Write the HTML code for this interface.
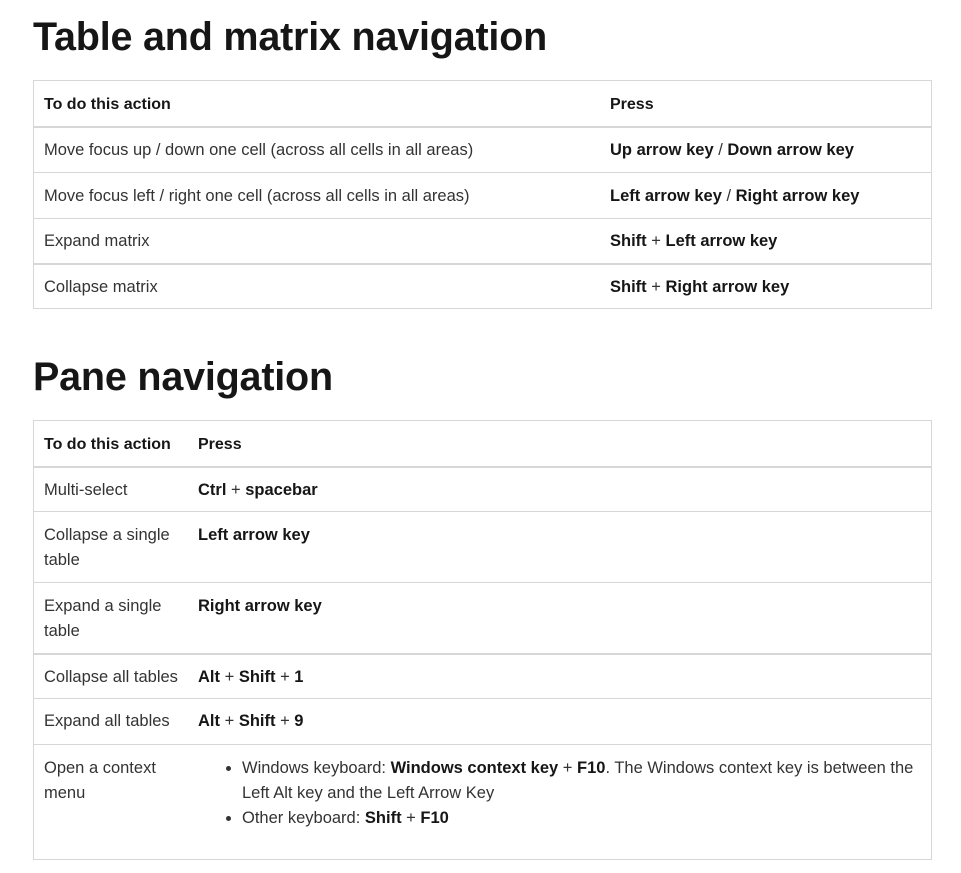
<!DOCTYPE html>
<html><head><style>
body{margin:0;background:#fff;font-family:"Liberation Sans",sans-serif;color:#333;width:961px;height:873px;overflow:hidden;position:relative}
h1{position:absolute;left:33px;margin:0;font-size:39.5px;font-weight:bold;color:#161616;letter-spacing:-0.2px;line-height:1}
table{position:absolute;left:33px;width:899px;border-collapse:collapse;font-size:16.5px;border:1px solid #d7d7d7}
td,th{border-top:1px solid #d7d7d7;padding:0 10px;text-align:left;vertical-align:middle}
td{padding-top:2px}
th{font-weight:bold;color:#161616;padding-top:4px;font-size:16px}
b{color:#161616}
.t2 td{vertical-align:top;line-height:25px}
ul{margin:0;padding-left:44px}
li{line-height:25px}
</style></head><body>
<h1 style="top:18px">Table and matrix navigation</h1>
<table style="top:80px">
<tr style="height:46px;border-bottom:2px solid #d7d7d7"><th style="width:546px">To do this action</th><th>Press</th></tr>
<tr style="height:46px"><td>Move focus up / down one cell (across all cells in all areas)</td><td><b>Up arrow key</b> / <b>Down arrow key</b></td></tr>
<tr style="height:46px"><td>Move focus left / right one cell (across all cells in all areas)</td><td><b>Left arrow key</b> / <b>Right arrow key</b></td></tr>
<tr style="height:45px"><td>Expand matrix</td><td><b>Shift</b> + <b>Left arrow key</b></td></tr>
<tr style="height:45px;border-top:2px solid #d7d7d7"><td>Collapse matrix</td><td><b>Shift</b> + <b>Right arrow key</b></td></tr>
</table>
<h1 style="top:358px">Pane navigation</h1>
<table class="t2" style="top:420px">
<tr style="height:46px;border-bottom:2px solid #d7d7d7"><th style="width:134px">To do this action</th><th>Press</th></tr>
<tr style="height:45px"><td style="padding-top:10px">Multi-select</td><td style="padding-top:10px"><b>Ctrl</b> + <b>spacebar</b></td></tr>
<tr style="height:71px"><td style="padding-top:11px">Collapse a single table</td><td style="padding-top:11px"><b>Left arrow key</b></td></tr>
<tr style="height:71px"><td style="padding-top:11px">Expand a single table</td><td style="padding-top:11px"><b>Right arrow key</b></td></tr>
<tr style="height:45px;border-top:2px solid #d7d7d7"><td style="padding-top:10px">Collapse all tables</td><td style="padding-top:10px"><b>Alt</b> + <b>Shift</b> + <b>1</b></td></tr>
<tr style="height:46px"><td style="padding-top:10px">Expand all tables</td><td style="padding-top:10px"><b>Alt</b> + <b>Shift</b> + <b>9</b></td></tr>
<tr style="height:115px"><td style="padding-top:11px">Open a context menu</td><td style="padding-top:11px"><ul><li>Windows keyboard: <b>Windows context key</b> + <b>F10</b>. The Windows context key is between the Left Alt key and the Left Arrow Key</li><li>Other keyboard: <b>Shift</b> + <b>F10</b></li></ul></td></tr>
</table>
</body></html>
